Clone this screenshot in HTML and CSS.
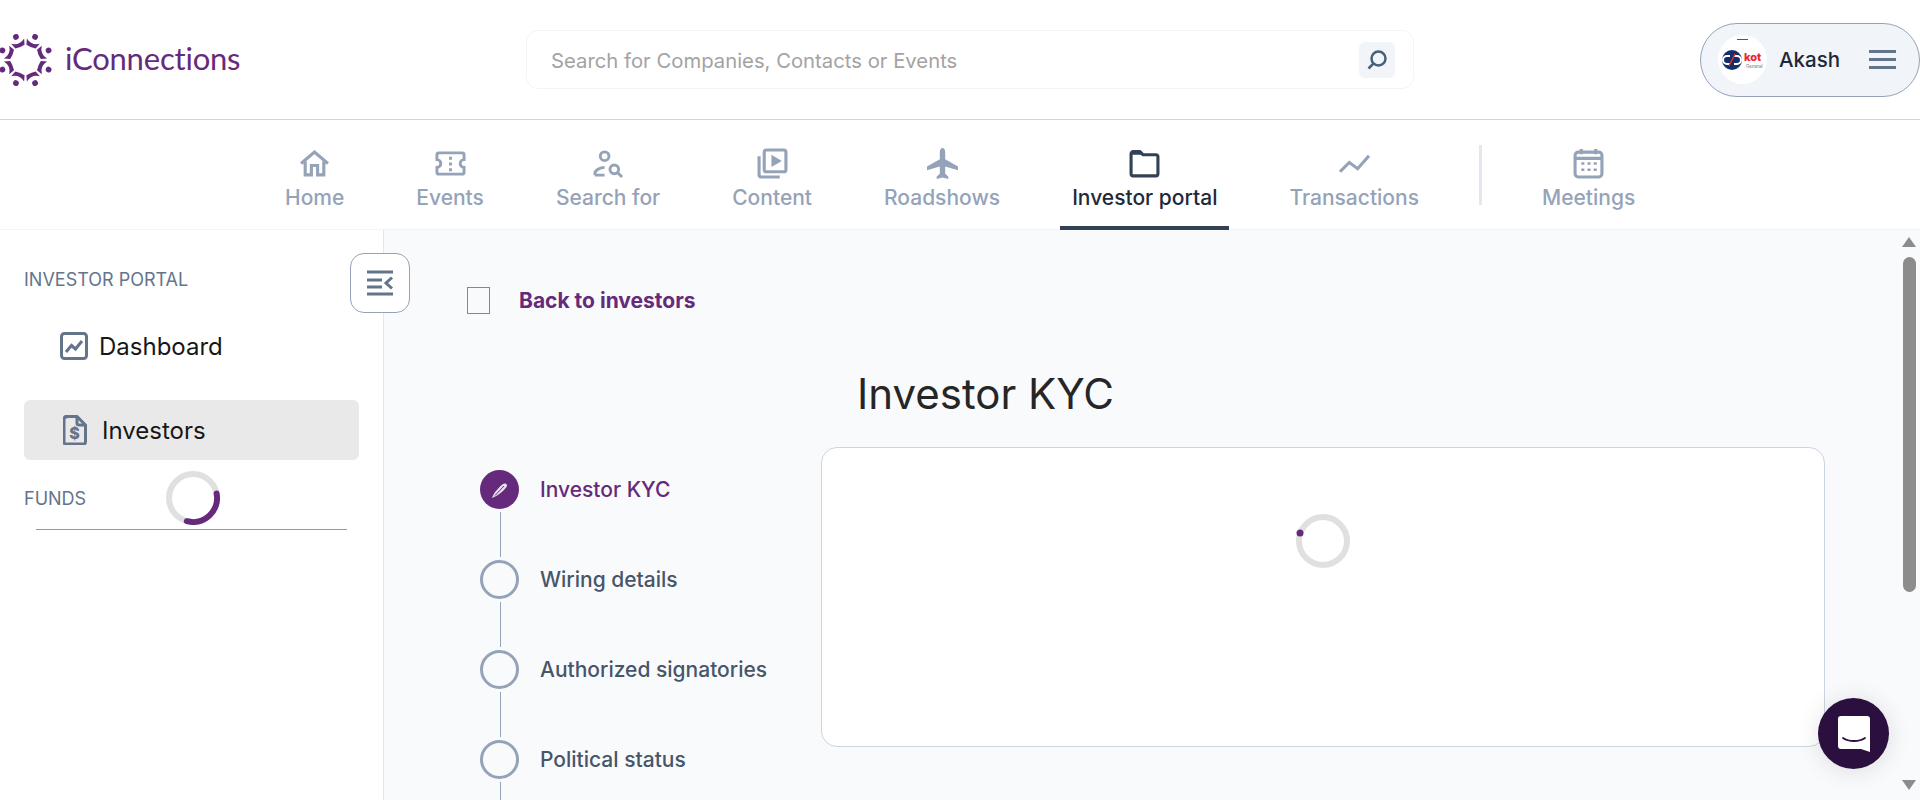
FILE: index.html
```html
<!DOCTYPE html>
<html lang="en">
<head>
	<meta charset="UTF-8">
	<title>Investor KYC</title>
	<link rel="stylesheet" href="styles.css">
</head>
<body>

	<header class="topbar">
		<a class="logo">
			<svg class="logo-mark" viewBox="0 0 52 52">
				<defs>
					<g id="person">
						<circle cx="0" cy="-25" r="2.900"/>
						<path d="M-7 -20.500Q0 -15.500 7 -20.500L5 -14.500Q0 -13.500 -5 -14.500Z"/>
					</g>
				</defs>
				<g transform="translate(25.500 26)">
					<use href="#person" transform="rotate(22.5)"/>
					<use href="#person" transform="rotate(67.5)"/>
					<use href="#person" transform="rotate(112.5)"/>
					<use href="#person" transform="rotate(157.5)"/>
					<use href="#person" transform="rotate(202.5)"/>
					<use href="#person" transform="rotate(247.5)"/>
					<use href="#person" transform="rotate(292.5)"/>
					<use href="#person" transform="rotate(337.5)"/>
				</g>
			</svg>
			<span class="logo-text">iConnections</span>
		</a>

		<div class="search">
			<span class="search-text">Search for Companies, Contacts or Events</span>
			<span class="search-btn">
				<svg viewBox="0 0 24 24" width="24" height="24"><circle cx="13.500" cy="10.500" r="7" class="ic-search"/><path d="M8.500 15.500L3.500 20.500" class="ic-search"/></svg>
			</span>
		</div>

		<div class="user-pill">
			<span class="avatar">
				<svg viewBox="0 0 49 49" width="49" height="49">
					<rect x="19" y="4" width="11" height="1" fill="#555"/>
					<circle cx="14" cy="25" r="10" fill="#13306b"/>
					<path d="M12 21h-3a4 4 0 0 0 0 8h3M16 21h3a4 4 0 0 1 0 8h-3" fill="none" stroke="#fff" stroke-width="2"/>
					<path d="M11 31L17 19" stroke="#e8262d" stroke-width="1.500"/>
					<text x="26" y="26" class="avatar-kot">kot</text>
					<text x="28" y="33" class="avatar-sub">General</text>
				</svg>
			</span>
			<span class="user-name">Akash</span>
			<span class="burger"><i></i><i></i><i></i></span>
		</div>
	</header>

	<nav class="mainnav">
		<a class="nav-item">
			<svg class="nav-ic" viewBox="0 0 30 30"><path d="M2 15L15 4L28 15M6 13v13h6v-9h6v9h6V13"/></svg>
			Home
		</a>
		<a class="nav-item">
			<svg class="nav-ic" viewBox="0 0 32 30"><path d="M4 4h24a2 2 0 0 1 2 2v5a4 4 0 0 0 0 8v5a2 2 0 0 1-2 2H4a2 2 0 0 1-2-2v-5a4 4 0 0 0 0-8V6a2 2 0 0 1 2-2z"/><path d="M16 8v3M16 14v3M16 20v3"/></svg>
			Events
		</a>
		<a class="nav-item">
			<svg class="nav-ic" viewBox="0 0 32 30"><circle cx="12" cy="7.500" r="4.500"/><path d="M2 27v-2c0-3 5-6 10-6M2 27h10"/><circle cx="22" cy="21" r="4.500"/><path d="M25.500 24.500L30 29"/></svg>
			Search for
		</a>
		<a class="nav-item">
			<svg class="nav-ic" viewBox="0 0 30 30"><path d="M2 8v18a2 2 0 0 0 2 2h18"/><rect x="7" y="2" width="21" height="21" rx="2"/><path d="M14 6.500l10 6-10 6z" class="fill"/></svg>
			Content
		</a>
		<a class="nav-item">
			<svg class="nav-ic" viewBox="0 0 30 30"><path d="M15 0c1.600 0 2.600 2 2.600 4v7l12.400 7v3.500l-12.400-3.500v7l3 2.500V30l-5.600-1.500L9.400 30v-2.500l3-2.500v-7L0 21.500V18l12.400-7V4c0-2 1-4 2.600-4z" class="fill"/></svg>
			Roadshows
		</a>
		<a class="nav-item active">
			<svg class="nav-ic" viewBox="0 0 30 30"><path d="M2 5.500a2 2 0 0 1 2-2h6.500l3 3H26a2 2 0 0 1 2 2V25a2 2 0 0 1-2 2H4a2 2 0 0 1-2-2z"/><path d="M2 5.500a2 2 0 0 1 2-2h6.500l3 3H2z" class="fill"/></svg>
			Investor portal
		</a>
		<a class="nav-item">
			<svg class="nav-ic" viewBox="0 0 30 30"><path d="M1 23l9-9 8 6 11-12.500"/></svg>
			Transactions
		</a>
		<span class="nav-divider"></span>
		<a class="nav-item">
			<svg class="nav-ic" viewBox="0 0 30 30"><rect x="2" y="4" width="26" height="24" rx="3"/><path d="M8 1v5M22 1v5M2 10h26"/><path d="M8 15h3M14 15h3M20 15h3M8 21h3M14 21h3M20 21h3" class="dots"/></svg>
			Meetings
		</a>
	</nav>

	<div class="page">
		<aside class="sidebar">
			<button class="collapse">
				<svg viewBox="0 0 28 26" width="28" height="26"><path d="M1 2h26M1 24h26M1 10h15M1 17h15M26 7.500L20 13l6 5.500"/></svg>
			</button>
			<h4 class="side-title">INVESTOR PORTAL</h4>
			<a class="side-item side-dash">
				<svg viewBox="0 0 28 28" width="28" height="28"><rect x="1.500" y="1.500" width="25" height="25" rx="3"/><path d="M6 20l5.500-6.500 4 3.500L22 9"/></svg>
				Dashboard
			</a>
			<a class="side-item side-active">
				<svg viewBox="0 0 24 30" width="24" height="30"><path d="M3 1.500h11l8.500 8.500v17a2 2 0 0 1-2 2H3a2 2 0 0 1-2-2v-23a2 2 0 0 1 2-2z"/><path d="M14 1.500V8a2 2 0 0 0 2 2h6.500"/><text x="11.500" y="24" class="dollar">$</text></svg>
				Investors
			</a>
			<div class="funds-row">
				<h4 class="side-title">FUNDS</h4>
				<svg class="funds-spin" viewBox="0 0 54 54" width="54" height="54">
					<circle cx="27" cy="27" r="24" class="spin-bg"/>
					<path d="M50.600 22.500A24 24 0 0 1 20.800 50.200" class="spin-arc"/>
				</svg>
			</div>
			<div class="side-line"></div>
		</aside>

		<main class="content">
			<a class="back">
				<span class="back-ic"></span>
				Back to investors
			</a>
			<h1 class="kyc-title">Investor KYC</h1>
			<div class="kyc-body">
				<ol class="steps">
					<li class="step current">
						<span class="dot">
							<svg viewBox="0 0 20 20" width="20" height="20"><path d="M2 18c1-4 6-10 11-14 2.500-1.500 5 .5 3.500 3-3 4-9 9-14.500 11z" fill="#e9dff0"/><path d="M5 15.500L14 6" stroke="#652a7b" stroke-width="1"/></svg>
						</span>
						Investor KYC
					</li>
					<li class="step-line"></li>
					<li class="step"><span class="dot"></span>Wiring details</li>
					<li class="step-line"></li>
					<li class="step"><span class="dot"></span>Authorized signatories</li>
					<li class="step-line"></li>
					<li class="step"><span class="dot"></span>Political status</li>
					<li class="step-line"></li>
				</ol>
				<section class="kyc-card">
					<svg viewBox="0 0 54 54" width="54" height="54">
						<circle cx="27" cy="27" r="24" class="spin-bg"/>
						<circle cx="4" cy="19" r="3.500" fill="#652a7b"/>
					</svg>
				</section>
			</div>
		</main>

		<div class="scrollbar">
			<span class="arrow-up"></span>
			<span class="thumb"></span>
			<span class="arrow-down"></span>
		</div>
	</div>

	<button class="chat">
		<svg viewBox="0 0 32 36" width="32" height="36">
			<path d="M3 0h26a3 3 0 0 1 3 3v33l-9-3H3a3 3 0 0 1-3-3V3a3 3 0 0 1 3-3z" fill="#fff"/>
			<path d="M5 22c6 4 16 4 22 0" fill="none" stroke="#2a0f3f" stroke-width="1.800" stroke-linecap="round"/>
		</svg>
	</button>

</body>
</html>
```

FILE: styles.css
```css
* {
	margin: 0;
	padding: 0;
	box-sizing: border-box;
	font-family: "Inter", "Liberation Sans", sans-serif;
}

html, body {
	height: 800px;
	overflow: hidden;
	background: #fff;
}

body {
	display: flex;
	flex-direction: column;
}

/* top bar */

.topbar {
	display: flex;
	align-items: center;
	height: 120px;
	flex-shrink: 0;
	border-bottom: 1px solid #cbd5e1;
	background: #fff;
}

.logo {
	display: flex;
	align-items: center;
	width: 526px;
	flex-shrink: 0;
}

.logo-mark {
	width: 52px;
	height: 52px;
	fill: #652a7b;
}

.logo-text {
	margin: 0 0 4px 13px;
	font-family: "Lato", sans-serif;
	font-size: 31px;
	color: #652a7b;
	letter-spacing: -.2px;
}

.search {
	display: flex;
	align-items: center;
	justify-content: space-between;
	width: 888px;
	height: 59px;
	padding: 0 18px 0 24px;
	border: 1px solid #f1f5f9;
	border-radius: 12px;
}

.search-text {
	margin-top: 2px;
	font-size: 20.300px;
	color: #a3a3a3;
}

.search-btn {
	display: flex;
	align-items: center;
	justify-content: center;
	width: 36px;
	height: 36px;
	border-radius: 6px;
	background: #f1f5f9;
}

.ic-search {
	fill: none;
	stroke: #475f78;
	stroke-width: 2.500;
}

.user-pill {
	display: flex;
	align-items: center;
	width: 220px;
	height: 74px;
	margin-left: auto;
	padding-left: 17px;
	border: 1px solid #94a3b8;
	border-radius: 37px;
	background: #f1f5f9;
}

.avatar {
	display: block;
	width: 49px;
	height: 49px;
	border-radius: 50%;
	background: #fff;
}

.avatar-kot {
	font-size: 11px;
	font-weight: 800;
	fill: #e8262d;
}

.avatar-sub {
	font-size: 4.500px;
	fill: #666;
}

.user-name {
	margin-left: 12px;
	font-size: 20.500px;
	font-weight: 500;
	color: #1e293b;
}

.burger {
	display: flex;
	flex-direction: column;
	gap: 5px;
	width: 27px;
	margin-left: 29px;
}

.burger i {
	display: block;
	height: 3px;
	background: #64748b;
}

/* main nav */

.mainnav {
	display: flex;
	align-items: stretch;
	height: 110px;
	flex-shrink: 0;
	gap: 48px;
	padding-left: 273px;
	border-bottom: 1px solid #f1f5f9;
	background: #fff;
}

.nav-item {
	display: flex;
	flex-direction: column;
	align-items: center;
	justify-content: flex-start;
	gap: 6px;
	padding: 28px 12px 0;
	font-size: 21px;
	font-weight: 500;
	color: #94a3b8;
}

.nav-ic {
	width: 31px;
	height: 31px;
	fill: none;
	stroke: #94a3b8;
	stroke-width: 3;
}

.nav-ic .fill {
	fill: #94a3b8;
	stroke: none;
}

.nav-ic .dots {
	stroke-width: 2.500;
}

.nav-item.active {
	color: #1e293b;
	border-bottom: 4px solid #334155;
	margin-bottom: -1px;
}

.nav-item.active .nav-ic {
	stroke: #334155;
}

.nav-item.active .nav-ic .fill {
	fill: #334155;
}

.nav-divider {
	width: 3px;
	height: 60px;
	margin: 25px 0 0;
	background: #e2e8f0;
}

/* sidebar */

.page {
	display: flex;
	flex: 1;
	min-height: 0;
	background: #f9fafc;
}

.sidebar {
	position: relative;
	width: 384px;
	flex-shrink: 0;
	padding: 40px 24px 0;
	border-right: 1px solid #e2e8f0;
	background: #fff;
}

.side-title {
	font-size: 18px;
	line-height: 20px;
	font-weight: 400;
	color: #64748b;
}

.collapse {
	position: absolute;
	top: 23px;
	left: 350px;
	display: flex;
	align-items: center;
	justify-content: center;
	width: 60px;
	height: 60px;
	border: 1px solid #94a3b8;
	border-radius: 14px;
	background: #fff;
}

.collapse svg {
	fill: none;
	stroke: #64748b;
	stroke-width: 3;
}

.side-item {
	display: flex;
	align-items: center;
	height: 60px;
	font-size: 24px;
	color: #171717;
}

.side-item svg {
	fill: none;
	stroke: #64748b;
	stroke-width: 3;
}

.side-item .dollar {
	font-size: 16px;
	font-weight: 800;
	text-anchor: middle;
	fill: #64748b;
	stroke: none;
}

.side-dash {
	gap: 11px;
	margin-top: 26px;
	padding-left: 36px;
}

.side-active {
	gap: 15px;
	margin-top: 24px;
	padding-left: 39px;
	width: 335px;
	border-radius: 6px;
	background: #e9e9e9;
}

.funds-row {
	display: flex;
	align-items: center;
	gap: 80px;
	margin-top: 11px;
}

.funds-row .side-title {
	padding-top: 2px;
}

.spin-bg {
	fill: none;
	stroke: #e0e0e0;
	stroke-width: 6;
}

.spin-arc {
	fill: none;
	stroke: #652a7b;
	stroke-width: 6;
	stroke-linecap: round;
}

.side-line {
	height: 1px;
	margin: 4px 12px 0;
	background: #999;
}

/* content */

.content {
	flex: 1;
	min-width: 0;
	padding: 57px 0 0 83px;
}

.back {
	display: flex;
	align-items: center;
	gap: 29px;
	font-size: 21px;
	font-weight: 700;
	color: #652a7b;
}

.back-ic {
	display: block;
	width: 23px;
	height: 27px;
	border: 1px solid #a36fb8;
}

.kyc-title {
	margin: 55px 0 28px 390px;
	font-size: 42px;
	line-height: 50px;
	font-weight: 400;
	color: #262626;
}

.kyc-body {
	display: flex;
	align-items: flex-start;
}

.steps {
	width: 354px;
	flex-shrink: 0;
	padding: 23px 0 0 13px;
	list-style: none;
}

.step {
	display: flex;
	align-items: center;
	gap: 21px;
	height: 39px;
	font-size: 21px;
	font-weight: 500;
	color: #475569;
}

.step.current {
	color: #652a7b;
}

.dot {
	display: flex;
	align-items: center;
	justify-content: center;
	width: 39px;
	height: 39px;
	border: 3px solid #94a3b8;
	border-radius: 50%;
}

.current .dot {
	border: 0;
	background: #652a7b;
}

.step-line {
	width: 1px;
	height: 45px;
	margin: 3px 0 3px 20px;
	background: #94a3b8;
}

.kyc-card {
	display: flex;
	justify-content: center;
	width: 1004px;
	height: 300px;
	flex-shrink: 0;
	padding-top: 66px;
	border: 1px solid #cbd5e1;
	border-radius: 16px;
	background: #fff;
}

/* scrollbar */

.scrollbar {
	display: flex;
	flex-direction: column;
	align-items: center;
	width: 22px;
	flex-shrink: 0;
	padding: 7px 0 10px;
}

.arrow-up, .arrow-down {
	width: 0;
	height: 0;
	border-left: 7px solid transparent;
	border-right: 7px solid transparent;
}

.arrow-up {
	border-bottom: 10px solid #8c8c8c;
}

.arrow-down {
	margin-top: auto;
	border-top: 10px solid #8c8c8c;
}

.thumb {
	width: 13px;
	height: 335px;
	margin-top: 10px;
	border-radius: 7px;
	background: #8c8c8c;
}

/* chat launcher */

.chat {
	position: fixed;
	right: 31px;
	bottom: 31px;
	display: flex;
	align-items: center;
	justify-content: center;
	width: 71px;
	height: 71px;
	border: 0;
	border-radius: 50%;
	background: #2a0f3f;
	box-shadow: 0 2px 24px rgba(0, 0, 0, .12);
}
```
